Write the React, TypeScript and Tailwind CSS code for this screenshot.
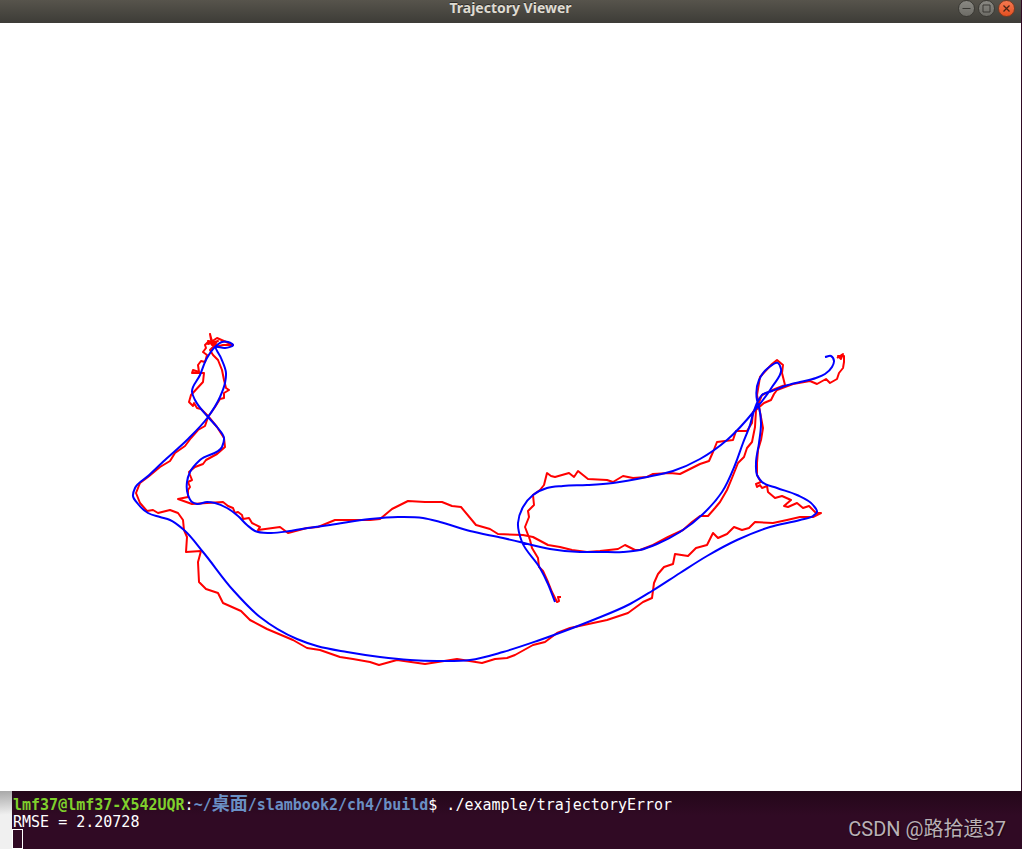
import type { ReactNode } from 'react';

type Point = [number, number];

const parsePoints = (text: string): Point[] =>
  text
    .trim()
    .split(/\s+/)
    .map((pair) => pair.split(',').map(Number) as Point);

const groundTruth = parsePoints(`
  825,357 831,356 834,361 832,367 825,374 816,378 800,382 785,386 772,391 762,395 758,401 753,414
  750,425 743,443 735,465 722,492 703,514 680,532 657,544 640,550 623,552 600,552 580,552 550,549
  520,542 503,538 470,531 440,522 423,518 398,517 370,519 330,525 308,528 290,531 270,533 255,531
  247,525 238,516 227,508 215,503 207,502 197,504 192,502 188,495 187,482 190,472 200,460 222,447
  224,438 217,427 208,417 195,400 192,392 200,375 207,358 215,347 222,342 228,342 233,345 225,348
  216,347 221,358 226,373 225,383 220,397 208,417 187,440 165,460 148,476 135,488 133,496 138,504
  148,513 160,517 170,520 184,530 203,552 233,590 260,617 297,639 317,646 347,652 380,657 410,660
  437,661 470,660 503,652 537,641 570,629 593,620 630,604 652,591 680,573 707,556 737,540 770,527
  800,520 813,516 817,512 813,505 797,495 777,488 762,482 757,475 756,463 759,443 761,423 759,407
  757,400 759,380 768,368 778,363 781,369 772,387 755,410 727,440 700,459 673,471 647,477 613,483
  587,485 563,486 547,488 533,495 523,507 518,523 522,542 540,568 548,584 555,602
`);

const estimated = parsePoints(`
  837,358 843,354 841,359 838,356 844,356 844,362 843,368 839,373 837,379 830,383 826,379 817,384
  810,381 793,384 777,390 774,394 771,400 764,403 756,410 755,427 752,442 747,448 744,457 738,463
  732,478 727,490 720,502 715,508 708,516 700,516 692,522 683,530 668,537 653,545 640,550 635,550
  625,545 618,549 600,551 587,552 572,550 560,547 548,545 533,537 523,535 498,534 490,529 476,525
  461,507 452,506 442,502 425,502 408,501 392,509 380,519 370,520 335,520 318,527 307,528 288,533
  280,527 258,530 260,527 252,523 249,518 243,519 242,515 238,512 235,513 233,508 228,506 223,502
  207,503 192,504 178,499 188,497 188,490 190,487 188,482 192,480 190,475 189,472 195,467 203,464
  206,460 217,454 225,447 224,438 217,427 208,416 201,409 197,408 194,403 193,406 189,402 191,395
  203,382 204,373 192,373 193,370 199,372 198,365 201,361 205,362 207,355 203,352 206,348 205,345
  209,341 213,345 210,334 212,345 218,341 208,344 217,338 233,345 223,345 215,347 208,341 216,344
  210,350 213,355 218,360 222,370 224,380 226,388 229,390 224,393 224,398 220,399 215,407 208,417
  205,426 198,430 191,438 185,446 175,453 170,461 160,467 148,477 140,483 136,493 140,503 147,511
  153,510 158,513 170,510 178,513 183,520 184,530 187,537 186,552 201,551 198,562 199,582 206,589
  218,593 223,603 241,611 250,620 267,629 293,640 307,648 320,650 340,657 353,659 370,662 379,665
  397,660 425,664 457,659 482,663 495,659 507,658 515,655 533,645 545,642 557,633 570,628 607,620
  628,613 643,602 652,598 654,583 658,574 664,567 673,564 675,554 688,556 696,548 707,545 713,533
  718,538 727,534 734,527 742,530 749,528 755,522 773,523 787,520 800,517 813,517 821,513 816,513
  809,506 803,508 797,503 788,507 784,506 791,500 782,496 775,498 768,492 767,486 762,488 760,485
  757,487 756,484 761,482 757,475 757,463 758,450 761,440 763,428 760,412 757,395 760,377 772,364
  777,360 783,365 782,373 785,385 775,389 762,395 758,405 753,412 752,423 747,431 736,431 733,440
  717,442 713,452 709,461 700,464 680,474 670,473 653,474 647,477 633,478 623,476 613,482 607,480
  588,479 578,471 574,477 569,473 555,477 551,476 547,473 544,485 540,490 533,495 534,505 528,511
  529,517 525,527 530,540 532,548 538,558 539,567 543,571 548,582 552,592 557,602 559,601 558,597
  561,597
`);

const distance = (a: Point, b: Point) => Math.hypot(b[0] - a[0], b[1] - a[1]);

const polyline = (points: Point[]) => 'M' + points.map((p) => p.join(' ')).join('L');

// direction of the curve at point i, weighted by the length of its two neighbouring segments
function tangent(points: Point[], i: number): Point {
  if (i === 0 || i === points.length - 1) {
    const a = points[Math.max(i - 1, 0)];
    const b = points[Math.min(i + 1, points.length - 1)];
    const d = distance(a, b);
    return [(b[0] - a[0]) / d, (b[1] - a[1]) / d];
  }
  const [a, b, c] = points.slice(i - 1, i + 2);
  const before = distance(a, b);
  const after = distance(b, c);
  const axis = (k: 0 | 1) =>
    (((b[k] - a[k]) / before) * after + ((c[k] - b[k]) / after) * before) / (before + after);
  return [axis(0), axis(1)];
}

function spline(points: Point[]) {
  let d = `M${points[0].join(' ')}`;
  for (let i = 0; i < points.length - 1; i++) {
    const p = points[i];
    const q = points[i + 1];
    const t = tangent(points, i);
    const u = tangent(points, i + 1);
    const r = distance(p, q) / 3;
    d += `C${p[0] + t[0] * r} ${p[1] + t[1] * r} ${q[0] - u[0] * r} ${q[1] - u[1] * r} ${q[0]} ${q[1]}`;
  }
  return d;
}

function WindowButton({ label, close = false, children }: { label: string; close?: boolean; children: ReactNode }) {
  return (
    <button
      type="button"
      aria-label={label}
      className={`h-[17px] w-[17px] rounded-full border ${
        close
          ? 'border-[#7a3a22] bg-linear-to-b from-[#f4784f] to-[#e4501f] text-[#4a2415]'
          : 'border-[#3a3934] bg-linear-to-b from-[#8a8983] to-[#6d6c66] text-[#3a3934]'
      }`}
    >
      <svg viewBox="0 0 15 15" className="h-full w-full" fill="none" stroke="currentColor">
        {children}
      </svg>
    </button>
  );
}

function TitleBar() {
  return (
    <header className="grid h-[23px] grid-cols-[1fr_auto_1fr] items-start bg-linear-to-b from-[#57544c] to-[#3d3c37]">
      <h1 className="col-start-2 font-['Noto_Sans','Open_Sans',sans-serif] text-sm leading-4 font-bold text-[#dfdbd2] [text-shadow:0_-1px_0_#2c2b27]">
        Trajectory Viewer
      </h1>
      <div className="flex justify-end gap-[3px] pr-[6px]">
        <WindowButton label="Minimize">
          <path d="M3.500 7.500h8" />
        </WindowButton>
        <WindowButton label="Maximize">
          <path d="M4 4h7v7H4z" />
        </WindowButton>
        <WindowButton label="Close" close>
          <path d="M4.500 4.500l6 6M10.500 4.500l-6 6" strokeWidth="1.3" />
        </WindowButton>
      </div>
    </header>
  );
}

function Terminal() {
  return (
    <section className="flex flex-1 bg-linear-to-br from-[#a8a8a8] to-[#f0f0f0] to-[24px]">
      <div className="ml-3 flex flex-1 justify-between bg-[#300a24] bg-linear-to-b from-[#240719] to-[#300a24] to-[24px] pl-px font-['DejaVu_Sans_Mono','Noto_Sans_CJK_SC',monospace] text-[15px] leading-[18px] text-white">
        <div className="pt-1 whitespace-pre">
          <p className="h-[18px]">
            <span className="font-bold text-[#7fd02c]">lmf37@lmf37-X542UQR</span>:
            <span className="font-bold text-[#6a8fc4]">
              ~/<span className="text-lg leading-[18px]">桌面</span>/slambook2/ch4/build
            </span>
            $ ./example/trajectoryError
          </p>
          <p className="h-4">RMSE = 2.20728</p>
          <div className="-ml-px h-5 w-[11px] border border-white" />
        </div>
        <p className="self-end pr-4 pb-2 font-['Roboto','Noto_Sans_CJK_SC',sans-serif] text-xl leading-6 text-[#b9b1b6] [text-shadow:1px_1px_1px_#1a0513]">
          CSDN @路拾遗37
        </p>
      </div>
    </section>
  );
}

export default function App() {
  return (
    <div className="flex min-h-screen flex-col bg-[#300a24]">
      <main className="mr-px bg-white">
        <TitleBar />
        <svg viewBox="0 23 1021 768" className="block h-auto w-full" role="img" aria-label="Trajectories" fill="none" strokeWidth="2">
          <path d={polyline(estimated)} stroke="#ff0000" strokeLinejoin="round" />
          <path d={spline(groundTruth)} stroke="#0000ff" />
        </svg>
      </main>
      <Terminal />
    </div>
  );
}
